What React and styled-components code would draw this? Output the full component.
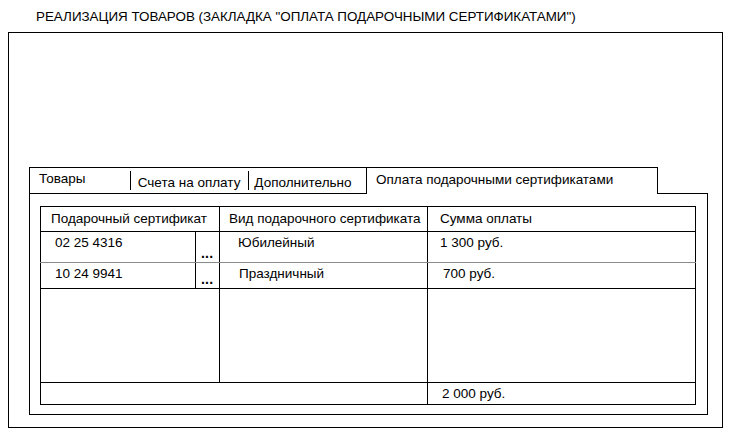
import React from 'react';
import styled, { createGlobalStyle } from 'styled-components';

const GlobalStyle = createGlobalStyle`
  html, body {
    margin: 0;
    padding: 0;
    background: #ffffff;
  }
  body {
    font-family: "Liberation Sans", Arial, sans-serif;
    font-size: 13.5px;
    color: #000;
  }
`;

const Page = styled.div`
  width: 740px;
  height: 442px;
  overflow: hidden;
`;

const Title = styled.div`
  height: 32px;
  padding-left: 36px;
  line-height: 34px;
  font-size: 13.4px;
`;

const Frame = styled.div`
  margin-left: 8px;
  border: 1px solid #000;
  padding: 134px 0 0 20px;
  box-sizing: border-box;
  height: 396px;
  width: 715px;
`;

const TabPanel = styled.div`
  width: 679px;
  display: flex;
  flex-direction: column;
`;

const TabStrip = styled.div`
  display: flex;
  height: 27px;
`;

const InactiveTabs = styled.div`
  display: flex;
  width: 337px;
  border-top: 1px solid #000;
  border-left: 1px solid #000;
  border-bottom: 1px solid #000;
  box-sizing: border-box;
`;

const Tab = styled.div`
  width: ${p => p.$w}px;
  margin-top: ${p => (p.$first ? 0 : 3)}px;
  margin-bottom: ${p => (p.$first ? 0 : 3)}px;
  border-left: ${p => (p.$first ? 'none' : '1px solid #000')};
  padding: ${p => p.$pad};
  box-sizing: border-box;
  white-space: nowrap;
  line-height: 16px;
`;

const ActiveTab = styled.div`
  width: 292px;
  border: 1px solid #000;
  border-bottom: none;
  padding: 4px 0 0 9px;
  box-sizing: border-box;
  line-height: 16px;
  white-space: nowrap;
`;

const TabFiller = styled.div`
  flex: 1;
  border-bottom: 1px solid #000;
`;

const PanelBody = styled.div`
  height: 221px;
  border: 1px solid #000;
  border-top: none;
  padding: 12px 12px 0 10px;
  box-sizing: border-box;
`;

const Grid = styled.table`
  border-collapse: collapse;
  table-layout: fixed;
  width: 655px;
  font-size: 13.5px;
`;

const Cell = styled.td`
  border: 1px solid #000;
  ${p => p.$greyBottom && 'border-bottom-color: #8a8a8a;'}
  height: ${p => p.$h}px;
  padding: ${p => p.$pt || 0}px 0 0 ${p => p.$pl || 0}px;
  vertical-align: ${p => p.$va || 'top'};
  white-space: nowrap;
  line-height: 16px;
  box-sizing: border-box;
`;

const Dots = styled.td`
  border: 1px solid #000;
  ${p => p.$greyBottom && 'border-bottom-color: #8a8a8a;'}
  vertical-align: bottom;
  padding: 0 0 2px 5px;
  line-height: 14px;
  font-size: 14px;
  font-weight: bold;
  letter-spacing: 0.2px;
`;

const rows = [
  { id: '02 25 4316', kind: 'Юбилейный', sum: '1 300 руб.', h: 31, kp: 18, sp: 12 },
  { id: '10 24 9941', kind: 'Праздничный', sum: '700 руб.', h: 26, kp: 19, sp: 15 },
];

export default function App() {
  return (
    <Page>
      <GlobalStyle />
      <Title>РЕАЛИЗАЦИЯ ТОВАРОВ (ЗАКЛАДКА "ОПЛАТА ПОДАРОЧНЫМИ СЕРТИФИКАТАМИ")</Title>
      <Frame>
        <TabPanel>
          <TabStrip>
            <InactiveTabs>
              <Tab $first $w={100} $pad="3px 0 0 9px">Товары</Tab>
              <Tab $w={119} $pad="4px 0 0 7px">Счета на оплату</Tab>
              <Tab $w={118} $pad="4px 0 0 5px">Дополнительно</Tab>
            </InactiveTabs>
            <ActiveTab>Оплата подарочными сертификатами</ActiveTab>
            <TabFiller />
          </TabStrip>
          <PanelBody>
            <Grid>
              <colgroup>
                <col style={{ width: 155 }} />
                <col style={{ width: 24 }} />
                <col style={{ width: 208 }} />
                <col style={{ width: 268 }} />
              </colgroup>
              <tbody>
                <tr>
                  <Cell colSpan={2} $h={25} $pl={10} $va="middle">Подарочный сертификат</Cell>
                  <Cell $h={25} $pl={9} $va="middle">Вид подарочного сертификата</Cell>
                  <Cell $h={25} $pl={12} $va="middle">Сумма оплаты</Cell>
                </tr>
                {rows.map((r, i) => (
                  <tr key={r.id}>
                    <Cell $h={r.h} $pl={14} $pt={3} $greyBottom={i === 0}>{r.id}</Cell>
                    <Dots $greyBottom={i === 0}>...</Dots>
                    <Cell $h={r.h} $pl={r.kp} $pt={3} $greyBottom={i === 0}>{r.kind}</Cell>
                    <Cell $h={r.h} $pl={r.sp} $pt={3} $greyBottom={i === 0}>{r.sum}</Cell>
                  </tr>
                ))}
                <tr>
                  <Cell colSpan={2} $h={94} />
                  <Cell $h={94} />
                  <Cell $h={94} />
                </tr>
                <tr>
                  <Cell colSpan={3} $h={22} />
                  <Cell $h={22} $pl={14} $va="middle">2 000 руб.</Cell>
                </tr>
              </tbody>
            </Grid>
          </PanelBody>
        </TabPanel>
      </Frame>
    </Page>
  );
}
